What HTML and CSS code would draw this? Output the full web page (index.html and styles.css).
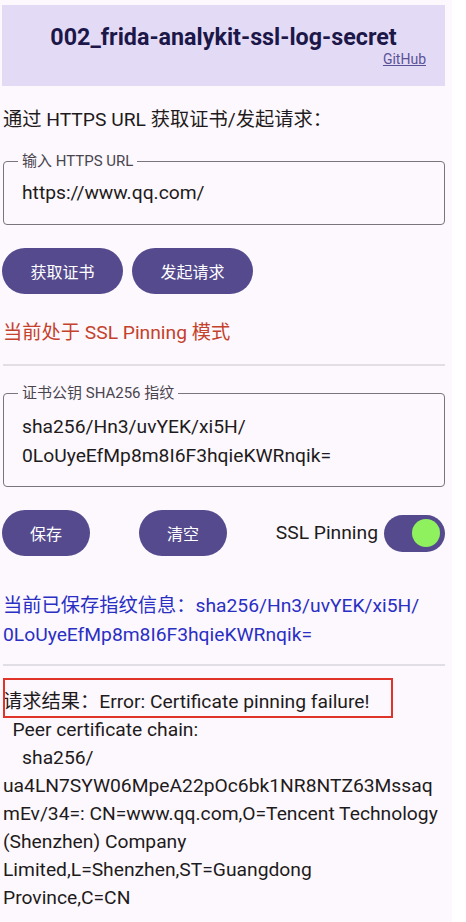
FILE: index.html
```html
<!DOCTYPE html>
<html lang="zh">
<head>
<meta charset="utf-8">
<title>002_frida-analykit-ssl-log-secret</title>
<link rel="stylesheet" href="styles.css">
</head>
<body>
<div class="app">
  <header class="header">
    <h1 class="title">002_frida-analykit-ssl-log-secret</h1>
    <div class="link-row"><a class="gh-link" href="#">GitHub</a></div>
  </header>

  <p class="heading">通过 HTTPS URL 获取证书/发起请求：</p>

  <fieldset class="field field-url">
    <legend class="field-label">输入 HTTPS URL</legend>
    <div class="field-text">https://www.qq.com/</div>
  </fieldset>

  <div class="btn-row">
    <button class="btn btn-wide">获取证书</button>
    <button class="btn btn-wide">发起请求</button>
  </div>

  <p class="mode-text">当前处于 SSL Pinning 模式</p>

  <div class="divider divider-1"></div>

  <fieldset class="field field-sha">
    <legend class="field-label">证书公钥 SHA256 指纹</legend>
    <div class="field-text field-multi">sha256/Hn3/uvYEK/xi5H/<br>0LoUyeEfMp8m8I6F3hqieKWRnqik=</div>
  </fieldset>

  <div class="ctrl-row">
    <button class="btn btn-short">保存</button>
    <button class="btn btn-short">清空</button>
    <div class="switch-group">
      <span class="switch-label">SSL Pinning</span>
      <span class="switch"><span class="switch-thumb"></span></span>
    </div>
  </div>

  <p class="saved-text">当前已保存指纹信息：sha256/Hn3/uvYEK/xi5H/<br>0LoUyeEfMp8m8I6F3hqieKWRnqik=</p>

  <div class="divider divider-2"></div>

  <div class="result">
    <div class="result-line">请求结果：Error: Certificate pinning failure!</div>
    <div class="result-line">  Peer certificate chain:</div>
    <div class="result-line">    sha256/</div>
    <div class="result-line">ua4LN7SYW06MpeA22pOc6bk1NR8NTZ63Mssaq</div>
    <div class="result-line">mEv/34=: CN=www.qq.com,O=Tencent Technology</div>
    <div class="result-line">(Shenzhen) Company</div>
    <div class="result-line">Limited,L=Shenzhen,ST=Guangdong</div>
    <div class="result-line">Province,C=CN</div>
    <div class="highlight-box"></div>
  </div>
</div>
</body>
</html>
```

FILE: styles.css
```css
* { box-sizing: border-box; }

html, body {
  margin: 0;
  padding: 0;
  background: #ffffff;
}

body {
  width: 466px;
  height: 922px;
  overflow: hidden;
  font-family: Roboto, "Noto Sans CJK SC", sans-serif;
  color: #1d1b20;
}

.app {
  width: 452px;
  height: 922px;
  background: #fdf8fd;
  padding: 5px 7px 0 3px;
}

.header {
  height: 81px;
  margin-left: -1px;
  background: #e3dbf6;
  padding-top: 18px;
}

.title {
  margin: 0;
  font-size: 23.3px;
  line-height: 28px;
  font-weight: 700;
  color: #1c1748;
  text-align: center;
}

.link-row {
  margin-top: 0;
  text-align: right;
  padding-right: 19px;
  line-height: 16px;
}

.gh-link {
  font-size: 14px;
  color: #5b5296;
  text-decoration: underline;
}

.heading {
  margin: 20px 0 0;
  font-size: 19.25px;
  line-height: 28px;
  color: #1d1b20;
}

.field {
  margin: 18px 0 0;
  border: 1px solid #79747e;
  border-radius: 4px;
  padding: 0 18px;
  min-width: 0;
}

.field-label {
  font-size: 15px;
  line-height: 18px;
  color: #49454f;
  padding: 0 4px;
  margin-left: -4px;
}

.field-text {
  font-size: 19.25px;
  line-height: 28px;
  color: #1d1b20;
}

.field-url .field-text {
  padding: 9px 0 17px;
}

.field-sha .field-text {
  line-height: 29px;
  padding: 10px 0 16px;
}

.btn-row {
  display: flex;
  gap: 9px;
  margin-top: 23px;
  margin-left: -1px;
}

.btn {
  height: 46px;
  border: none;
  border-radius: 23px;
  background: #554a8d;
  color: #ffffff;
  font-family: Roboto, "Noto Sans CJK SC", sans-serif;
  font-size: 16px;
  padding: 0;
}

.btn-wide { width: 121px; }
.btn-short { width: 88px; }

.mode-text {
  margin: 25px 0 0;
  font-size: 19.25px;
  line-height: 28px;
  color: #c4412c;
}

.divider {
  height: 2px;
  background: #e2dee6;
}

.divider-1 { margin-top: 17px; }

.ctrl-row {
  display: flex;
  justify-content: space-between;
  align-items: center;
  margin-top: 23px;
  margin-left: -1px;
}

.switch-group {
  display: flex;
  align-items: center;
  gap: 6px;
}

.switch-label {
  font-size: 19.25px;
  line-height: 28px;
  color: #1d1b20;
}

.switch {
  width: 61px;
  height: 37px;
  border-radius: 19px;
  background: #554a8d;
  display: flex;
  align-items: center;
  justify-content: flex-end;
  padding-right: 5px;
}

.switch-thumb {
  width: 28px;
  height: 28px;
  border-radius: 50%;
  background: #8ff15d;
}

.saved-text {
  margin: 35px 0 0;
  font-size: 19.25px;
  line-height: 29px;
  color: #2a2fc4;
}

.divider-2 { margin-top: 15px; }

.result {
  position: relative;
  margin-top: 22px;
  font-size: 19.25px;
  line-height: 28px;
  color: #1d1b20;
}

.result-line {
  white-space: pre;
}

.highlight-box {
  position: absolute;
  left: 0;
  top: -10px;
  width: 390px;
  height: 40px;
  border: 2px solid #e0332a;
}
```
